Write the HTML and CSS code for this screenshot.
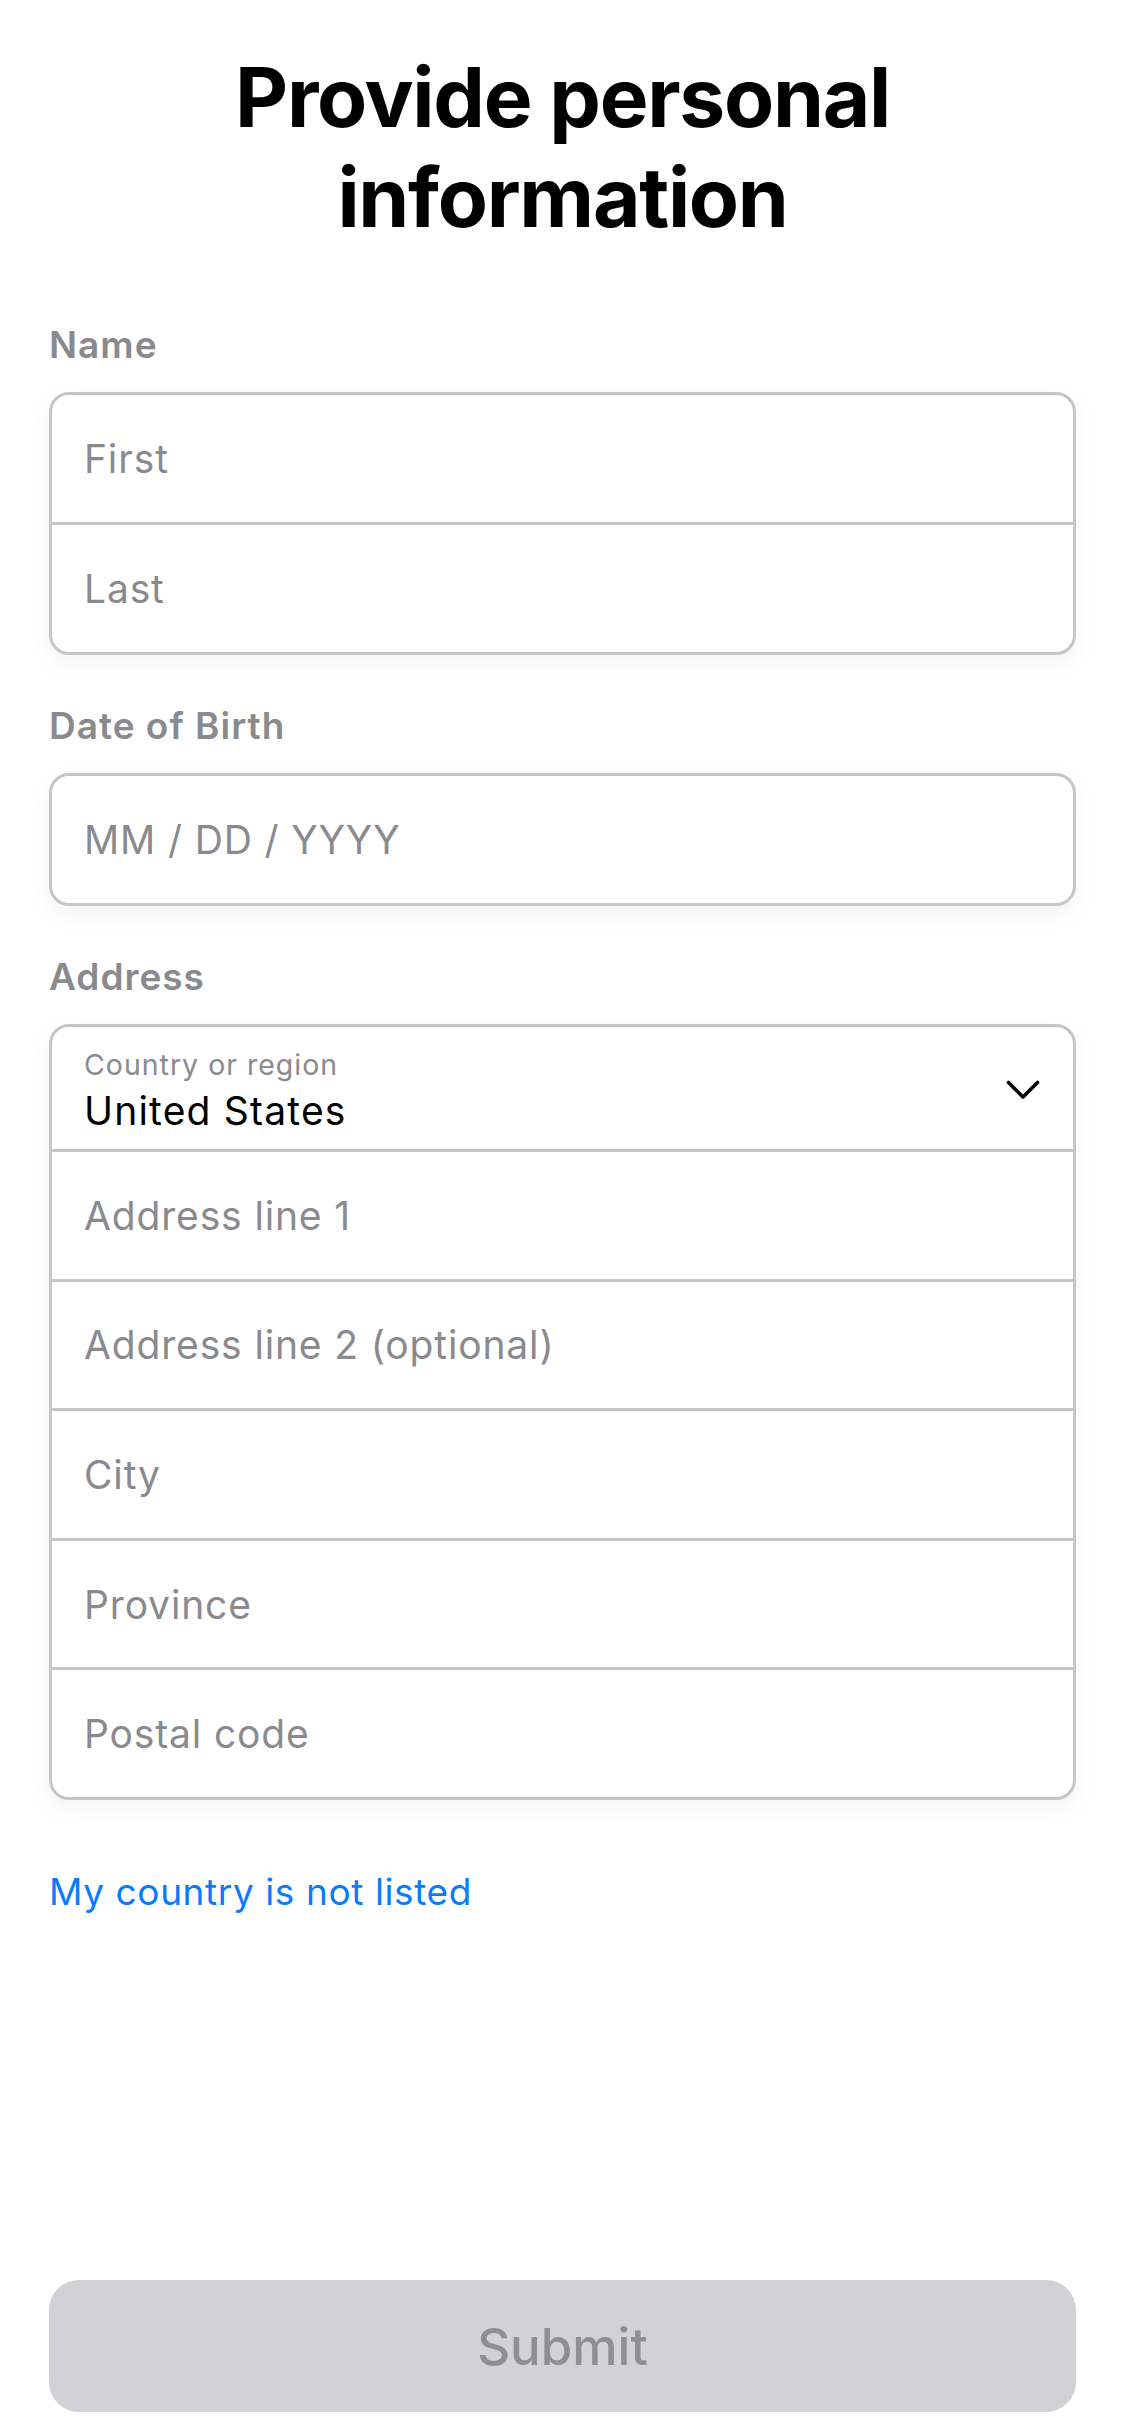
FILE: index.html
```html
<!DOCTYPE html>
<html lang="en">
<head>
<meta charset="utf-8">
<title>Provide personal information</title>
<link rel="stylesheet" href="styles.css">
</head>
<body>
<main class="page">
  <h1 class="title">Provide personal<br>information</h1>

  <section class="group group-name">
    <div class="label">Name</div>
    <div class="fields">
      <div class="row"><span class="placeholder">First</span></div>
      <div class="row"><span class="placeholder">Last</span></div>
    </div>
  </section>

  <section class="group">
    <div class="label">Date of Birth</div>
    <div class="fields">
      <div class="row"><span class="placeholder">MM / DD / YYYY</span></div>
    </div>
  </section>

  <section class="group">
    <div class="label">Address</div>
    <div class="fields">
      <div class="row row-select">
        <div class="select-text">
          <span class="select-caption">Country or region</span>
          <span class="select-value">United States</span>
        </div>
        <svg class="chevron" width="34" height="21" viewBox="0 0 34 21" aria-hidden="true">
          <path d="M2.5 2.5 L17 17 L31.5 2.5" fill="none" stroke="#000" stroke-width="3.6" stroke-linecap="round" stroke-linejoin="round"/>
        </svg>
      </div>
      <div class="row row-addr"><span class="placeholder">Address line 1</span></div>
      <div class="row row-addr"><span class="placeholder">Address line 2 (optional)</span></div>
      <div class="row row-addr"><span class="placeholder">City</span></div>
      <div class="row row-addr"><span class="placeholder">Province</span></div>
      <div class="row row-addr"><span class="placeholder">Postal code</span></div>
    </div>
  </section>

  <a class="link" href="#">My country is not listed</a>

  <button class="submit" type="button" disabled>Submit</button>
</main>
</body>
</html>
```

FILE: styles.css
```css
* {
  box-sizing: border-box;
}

html, body {
  margin: 0;
  padding: 0;
  background: #ffffff;
}

body {
  font-family: Inter, "Noto Sans", "Liberation Sans", sans-serif;
  color: #000;
}

.page {
  min-height: 2436px;
  display: flex;
  flex-direction: column;
  padding: 48px 49px 24px 49px;
}

.title {
  margin: 0;
  text-align: center;
  font-size: 82px;
  line-height: 100px;
  font-weight: 700;
  letter-spacing: -1.3px;
  color: #000;
}

.group {
  display: flex;
  flex-direction: column;
  gap: 25px;
  margin-top: 49px;
}

.group-name {
  margin-top: 75px;
}

.label {
  font-size: 37px;
  line-height: 44px;
  font-weight: 600;
  letter-spacing: 1px;
  color: #8a8a8e;
}

.fields {
  border: 3px solid #c6c6c8;
  border-radius: 20px;
  background: #fff;
  box-shadow: 0 8px 24px rgba(0, 0, 0, 0.05);
  overflow: hidden;
}

.row {
  height: 127px;
  display: flex;
  align-items: center;
  padding: 0 33px 0 32px;
}

.row + .row {
  border-top: 3px solid #c6c6c8;
  height: 130px;
}

.row-addr + .row-addr,
.row-select + .row-addr {
  height: 129.6px;
}

.placeholder {
  font-size: 39px;
  line-height: 47px;
  letter-spacing: 0.85px;
  color: #8a8a8e;
}

.row-select {
  height: 122px;
  align-items: stretch;
  justify-content: space-between;
}

.select-text {
  display: flex;
  flex-direction: column;
  padding-top: 21px;
  gap: 5px;
}

.select-caption {
  font-size: 28.5px;
  line-height: 34px;
  letter-spacing: 1px;
  color: #8a8a8e;
}

.select-value {
  font-size: 39px;
  line-height: 47px;
  letter-spacing: 1.2px;
  color: #000;
}

.chevron {
  align-self: center;
  margin-top: 4px;
  flex: none;
}

.link {
  margin-top: 70px;
  font-size: 37px;
  line-height: 44px;
  letter-spacing: 0.6px;
  color: #0a7aff;
  text-decoration: none;
  align-self: flex-start;
}

.submit {
  margin-top: auto;
  height: 132px;
  width: 100%;
  border: none;
  border-radius: 30px;
  background: #d1d1d6;
  color: #8e8e93;
  font-family: Inter, "Noto Sans", "Liberation Sans", sans-serif;
  font-size: 51px;
  font-weight: 500;
  padding: 0;
}
```
